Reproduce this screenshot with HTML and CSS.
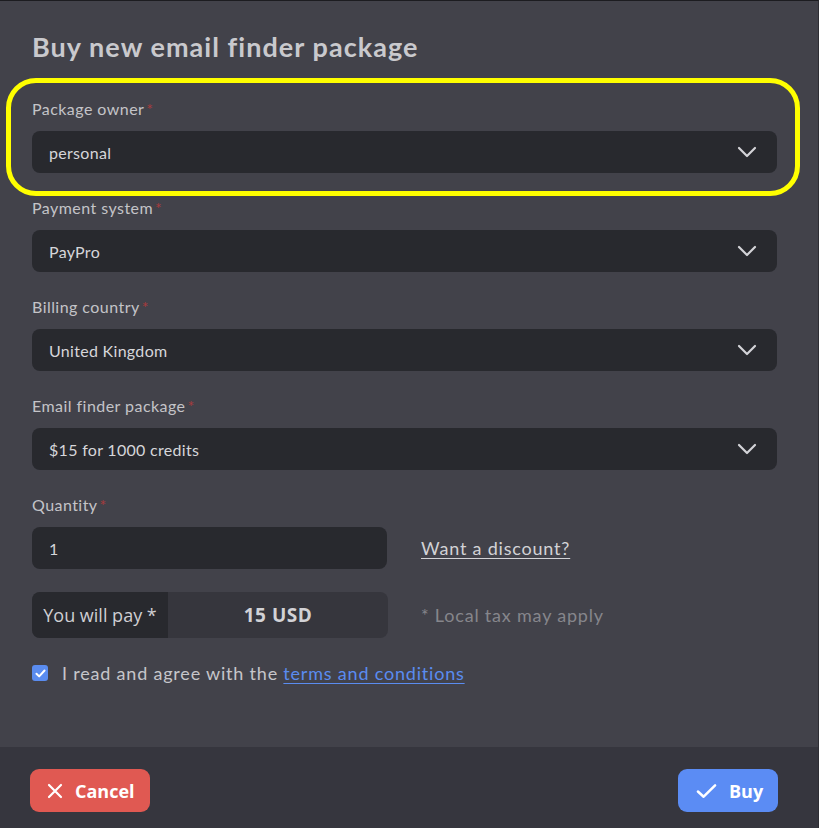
FILE: index.html
```html
<!DOCTYPE html>
<html lang="en">
<head>
    <meta charset="UTF-8">
    <meta name="viewport" content="width=device-width, initial-scale=1.0">
    <title>Buy new email finder package</title>
    <link rel="stylesheet" href="styles.css">
</head>
<body>
    <div class="modal">
        <div class="modal-body">
            <h1>Buy new email finder package</h1>

            <div class="field">
                <label>Package owner<span class="req">*</span></label>
                <div class="select">
                    <span>personal</span>
                    <svg class="chevron" viewBox="0 0 20 12" width="20" height="12"><path d="M2 2l8 8 8-8" fill="none" stroke="#d4d4d8" stroke-width="2.2" stroke-linecap="round" stroke-linejoin="round"/></svg>
                </div>
            </div>

            <div class="field">
                <label>Payment system<span class="req">*</span></label>
                <div class="select">
                    <span>PayPro</span>
                    <svg class="chevron" viewBox="0 0 20 12" width="20" height="12"><path d="M2 2l8 8 8-8" fill="none" stroke="#d4d4d8" stroke-width="2.2" stroke-linecap="round" stroke-linejoin="round"/></svg>
                </div>
            </div>

            <div class="field">
                <label>Billing country<span class="req">*</span></label>
                <div class="select">
                    <span>United Kingdom</span>
                    <svg class="chevron" viewBox="0 0 20 12" width="20" height="12"><path d="M2 2l8 8 8-8" fill="none" stroke="#d4d4d8" stroke-width="2.2" stroke-linecap="round" stroke-linejoin="round"/></svg>
                </div>
            </div>

            <div class="field">
                <label>Email finder package<span class="req">*</span></label>
                <div class="select">
                    <span>$15 for 1000 credits</span>
                    <svg class="chevron" viewBox="0 0 20 12" width="20" height="12"><path d="M2 2l8 8 8-8" fill="none" stroke="#d4d4d8" stroke-width="2.2" stroke-linecap="round" stroke-linejoin="round"/></svg>
                </div>
            </div>

            <div class="field">
                <label>Quantity<span class="req">*</span></label>
                <div class="row">
                    <div class="input">1</div>
                    <a class="discount" href="#">Want a discount?</a>
                </div>
            </div>

            <div class="row pay-row">
                <div class="pay">
                    <span class="pay-label">You will pay *</span>
                    <span class="pay-value">15 USD</span>
                </div>
                <span class="tax">* Local tax may apply</span>
            </div>

            <div class="agree">
                <span class="checkbox">
                    <svg viewBox="0 0 12 10" width="11" height="9"><path d="M1.5 5.2l3 3 6-6.5" fill="none" stroke="#fff" stroke-width="2.2" stroke-linecap="round" stroke-linejoin="round"/></svg>
                </span>
                <span>I read and agree with the <a href="#">terms and conditions</a></span>
            </div>

            <div class="highlight"></div>
        </div>

        <div class="modal-footer">
            <button class="btn btn-cancel">
                <svg viewBox="0 0 16 16" width="16" height="16"><path d="M2 2l12 12M14 2L2 14" stroke="#fff" stroke-width="2.2" stroke-linecap="round"/></svg>
                Cancel
            </button>
            <button class="btn btn-buy">
                <svg viewBox="0 0 22 16" width="21" height="16"><path d="M2 8.5l6 5.5L20 2" fill="none" stroke="#fff" stroke-width="2.6" stroke-linecap="round" stroke-linejoin="round"/></svg>
                Buy
            </button>
        </div>
    </div>
</body>
</html>
```
FILE: styles.css
```css
body {
    margin: 0;
    background-color: #42424a;
    font-family: Lato, "Noto Sans", sans-serif;
    color: #cfcfd3;
}

.modal {
    min-height: 100vh;
    display: flex;
    flex-direction: column;
    border-top: 1px solid #1c1c20;
    border-right: 1px solid #2e2e34;
    box-sizing: border-box;
}

.modal-body {
    flex: 1;
    position: relative;
    padding: 30px 41px 0 32px;
}

h1 {
    margin: 0 0 36px;
    font-size: 27px;
    line-height: 32px;
    font-weight: 700;
    letter-spacing: 1.05px;
    color: #c9c9cd;
}

.field {
    margin-bottom: 25px;
}

label {
    display: block;
    font-size: 16px;
    line-height: 20px;
    letter-spacing: 0.45px;
    margin-bottom: 12px;
    color: #c4c4c8;
}

.req {
    color: #a83b3d;
    margin-left: 2px;
}

.select, .input {
    height: 42px;
    box-sizing: border-box;
    border-radius: 8px;
    background-color: #28292e;
    display: flex;
    align-items: center;
    justify-content: space-between;
    padding: 0 20px 0 17px;
    font-size: 16px;
    letter-spacing: 0.3px;
    color: #d6d6da;
}

.row {
    display: flex;
    align-items: center;
}

.input {
    width: 355px;
}

.discount {
    margin-left: 34px;
    font-size: 18px;
    letter-spacing: 0.8px;
    color: #d2d2d6;
    text-decoration: underline;
    text-underline-offset: 3px;
}

.pay-row {
    margin-top: -2px;
}

.pay {
    width: 356px;
    height: 46px;
    display: flex;
    border-radius: 8px;
    overflow: hidden;
    background-color: #36363d;
    font-family: "Open Sans", sans-serif;
    font-size: 18px;
}

.pay-label {
    width: 136px;
    background-color: #28292e;
    display: flex;
    align-items: center;
    justify-content: center;
    color: #cfcfd3;
}

.pay-value {
    flex: 1;
    display: flex;
    align-items: center;
    justify-content: center;
    font-weight: 700;
    font-size: 19px;
    letter-spacing: 0.5px;
    color: #d2d2d6;
}

.tax {
    margin-left: 33px;
    font-size: 18px;
    letter-spacing: 0.8px;
    color: #86868c;
}

.agree {
    display: flex;
    align-items: center;
    margin-top: 24px;
    font-size: 18px;
    letter-spacing: 0.8px;
    color: #c6c6ca;
}

.checkbox {
    width: 16px;
    height: 16px;
    border-radius: 3px;
    background-color: #5a8cf0;
    display: flex;
    align-items: center;
    justify-content: center;
    margin-right: 14px;
}

.agree a {
    color: #5a8cf0;
    text-underline-offset: 3px;
}

.highlight {
    position: absolute;
    left: 6px;
    top: 77px;
    width: 794px;
    height: 118px;
    box-sizing: border-box;
    border: 5px solid #ffff00;
    border-radius: 30px;
}

.modal-footer {
    height: 81px;
    background-color: #36363e;
    display: flex;
    justify-content: space-between;
    align-items: flex-start;
    padding: 22px 40px 0 30px;
    box-sizing: border-box;
}

.btn {
    height: 43px;
    border: none;
    border-radius: 9px;
    display: flex;
    align-items: center;
    color: #fff;
    font-family: "Open Sans", sans-serif;
    font-weight: 700;
    font-size: 18px;
    cursor: pointer;
}

.btn-cancel {
    width: 120px;
    background-color: #e05952;
    padding: 0 0 0 17px;
    gap: 12px;
}

.btn-buy {
    width: 100px;
    background-color: #5b8cf4;
    padding: 0 0 0 18px;
    gap: 12px;
}
```
